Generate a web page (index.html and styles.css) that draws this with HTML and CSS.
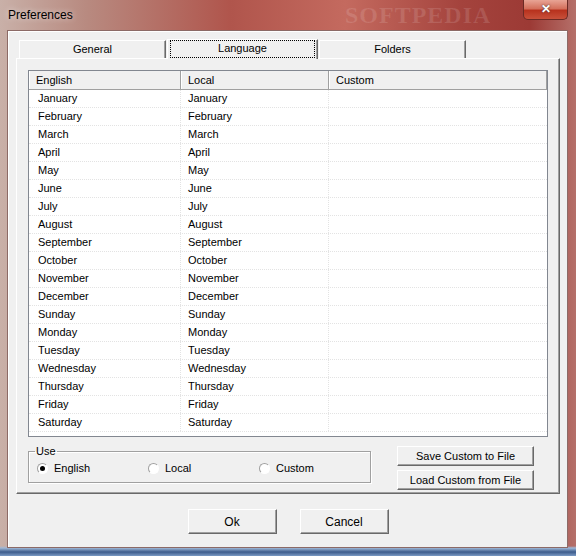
FILE: index.html
```html
<!DOCTYPE html>
<html lang="en">
<head>
    <meta charset="UTF-8">
    <title>Preferences</title>
    <link rel="stylesheet" href="styles.css">
</head>
<body>
    <div class="window">
        <div class="titlebar">
            <span class="title">Preferences</span>
            <span class="mark">SOFTPEDIA</span>
            <div class="close-btn">&#x2715;</div>
        </div>
        <div class="client">
            <div class="tabs">
                <div class="tab">General</div>
                <div class="tab tab-active"><span class="focus">Language</span></div>
                <div class="tab">Folders</div>
            </div>
            <div class="panel">
                <div class="list">
                    <div class="list-head">
                        <div class="col col-1">English</div>
                        <div class="col col-2">Local</div>
                        <div class="col col-3">Custom</div>
                    </div>
                    <div class="list-body" id="rows"></div>
                </div>
                <div class="lower">
                    <fieldset class="use-box">
                        <legend>Use</legend>
                        <label class="radio"><span class="dot checked"></span>English</label>
                        <label class="radio"><span class="dot"></span>Local</label>
                        <label class="radio"><span class="dot"></span>Custom</label>
                    </fieldset>
                    <div class="file-btns">
                        <button class="btn">Save Custom to File</button>
                        <button class="btn">Load Custom from File</button>
                    </div>
                </div>
            </div>
            <div class="footer">
                <button class="btn btn-big">Ok</button>
                <button class="btn btn-big">Cancel</button>
            </div>
        </div>
    </div>
    <script>
// fill the list with month and day names
const names = ['January', 'February', 'March', 'April', 'May', 'June', 'July',
    'August', 'September', 'October', 'November', 'December', 'Sunday', 'Monday',
    'Tuesday', 'Wednesday', 'Thursday', 'Friday', 'Saturday'];
const rows = document.getElementById('rows');
names.forEach(name => {
    const row = document.createElement('div');
    row.className = 'row';
    row.innerHTML = '<div class="col col-1">' + name + '</div>' +
        '<div class="col col-2">' + name + '</div>' +
        '<div class="col col-3"></div>';
    rows.appendChild(row);
});
    </script>
</body>
</html>
```

FILE: styles.css
```css
body {
    margin: 0;
    font-family: "Liberation Sans", Arial, sans-serif;
    font-size: 11px;
    color: #000;
}

.window {
    width: 576px;
    height: 556px;
    display: flex;
    flex-direction: column;
    background:
        linear-gradient(to bottom, rgba(0,0,0,0) 546px, #9fb8d8 548px, #3d5c8c 552px, #7a9ac4 556px),
        linear-gradient(90deg, #c9b0a8 0%, #b88a80 15%, #b0554c 40%, #c46a5f 60%, #a4433d 80%, #9c3a35 92%, #b5706a 100%);
}

.titlebar {
    height: 30px;
    position: relative;
    flex: none;
}

.title {
    position: absolute;
    left: 8px;
    top: 8px;
    font-size: 12px;
    color: #000;
    text-shadow: 0 0 6px rgba(255,255,255,0.7);
}

.mark {
    position: absolute;
    left: 345px;
    top: 2px;
    font-family: "Liberation Serif", serif;
    font-size: 24px;
    font-weight: bold;
    letter-spacing: 1px;
    color: rgba(255,255,255,0.12);
}

.close-btn {
    position: absolute;
    left: 523px;
    top: 0;
    width: 43px;
    height: 19px;
    border: 1px solid #6b2a24;
    border-top: none;
    border-radius: 0 0 5px 5px;
    background: linear-gradient(to bottom, #e8a495 0%, #d4705c 45%, #b8321e 55%, #c8503a 100%);
    color: #fff;
    font-size: 12px;
    font-weight: bold;
    text-align: center;
    line-height: 19px;
    text-shadow: 0 0 2px #333;
}

.client {
    flex: 1;
    margin: 0 8px 8px 7px;
    background: #f0f0f0;
    border: 1px solid #8c6a66;
    box-shadow: inset 1px 1px 0 #fff;
    display: flex;
    flex-direction: column;
}

.tabs {
    display: flex;
    align-items: flex-end;
    margin: 8px 0 0 11px;
    height: 19px;
    position: relative;
    z-index: 1;
}

.tab {
    box-sizing: border-box;
    width: 147px;
    height: 18px;
    border: 1px solid #fff;
    border-right-color: #696969;
    border-bottom: none;
    box-shadow: inset -1px 0 0 #a0a0a0;
    text-align: center;
    line-height: 16px;
    margin-right: 2px;
}

.tab-active {
    width: 151px;
    height: 20px;
    margin: 0 1px -1px -1px;
    background: #f0f0f0;
    line-height: 18px;
}

.focus {
    display: block;
    margin: 0 2px;
    height: 16px;
    border: 1px dotted #000;
    line-height: 14px;
}

.panel {
    margin: 0 7px 0 8px;
    height: 436px;
    box-sizing: border-box;
    border: 1px solid #fff;
    border-right-color: #696969;
    border-bottom-color: #696969;
    box-shadow: inset -1px -1px 0 #a0a0a0;
    padding: 11px 11px 0 11px;
}

.list {
    height: 367px;
    box-sizing: border-box;
    border: 1px solid #828790;
    background: #fff;
}

.list-head {
    display: flex;
    height: 18px;
    background: #f0f0f0;
    border-bottom: 1px solid #a0a0a0;
}

.list-head .col {
    border-left: 1px solid #fff;
    border-right: 1px solid #a0a0a0;
    line-height: 18px;
    padding-left: 6px;
}

.col {
    box-sizing: border-box;
}

.col-1 {
    width: 152px;
}

.col-2 {
    width: 148px;
}

.col-3 {
    flex: 1;
}

.row {
    display: flex;
    height: 18px;
    border-bottom: 1px dotted #e3e3e3;
    box-sizing: border-box;
    line-height: 17px;
}

.row .col {
    padding-left: 9px;
}

.row .col-1,
.row .col-2 {
    border-right: 1px dotted #e3e3e3;
}

.row .col-2 {
    padding-left: 7px;
}

.lower {
    display: flex;
    justify-content: space-between;
    margin-top: 9px;
}

.use-box {
    width: 343px;
    height: 37px;
    box-sizing: border-box;
    margin: 0;
    padding: 0 0 0 8px;
    border: 1px solid #a0a0a0;
    box-shadow: 1px 1px 0 #fff, inset 1px 1px 0 #fff;
    display: flex;
    align-items: center;
}

.use-box legend {
    padding: 0 1px;
    margin-left: -2px;
    line-height: 11px;
}

.radio {
    display: flex;
    align-items: center;
    width: 111px;
    margin-top: -3px;
}

.dot {
    width: 11px;
    height: 11px;
    box-sizing: border-box;
    border-radius: 50%;
    border: 1px solid #a0a0a0;
    border-right-color: #fff;
    border-bottom-color: #fff;
    background: #fff;
    margin-right: 6px;
    position: relative;
}

.dot.checked::after {
    content: "";
    position: absolute;
    left: 2px;
    top: 2px;
    width: 5px;
    height: 5px;
    border-radius: 50%;
    background: #000;
}

.file-btns {
    display: flex;
    flex-direction: column;
    gap: 4px;
    margin-right: 14px;
}

.btn {
    font-family: "Liberation Sans", Arial, sans-serif;
    font-size: 11px;
    width: 137px;
    height: 20px;
    padding: 0;
    background: #f0f0f0;
    border: 1px solid #fff;
    border-right-color: #696969;
    border-bottom-color: #696969;
    box-shadow: inset -1px -1px 0 #a0a0a0;
    color: #000;
}

.footer {
    display: flex;
    justify-content: center;
    gap: 23px;
    margin-top: 15px;
    padding-left: 1px;
}

.btn-big {
    width: 89px;
    height: 25px;
    font-size: 12px;
}
```
